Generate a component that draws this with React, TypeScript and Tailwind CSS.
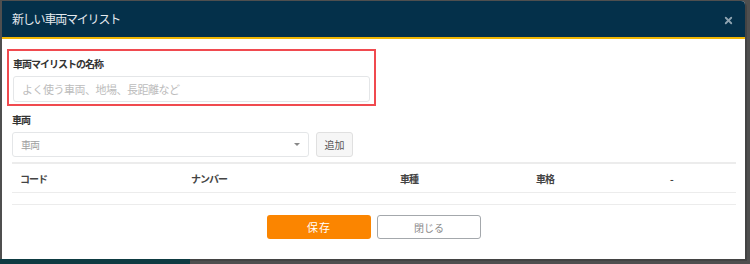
import { X } from 'lucide-react';

const columns = [
  { label: 'コード', width: 'w-[171px]' },
  { label: 'ナンバー', width: 'w-[209px]' },
  { label: '車種', width: 'w-[136px]' },
  { label: '車格', width: 'w-[134px]' },
  { label: '-', width: 'flex-1' },
];

export default function App() {
  return (
    <div
      className="w-[750px] h-[264px] bg-[#4f4f4f] flex flex-col overflow-hidden"
      style={{ fontFamily: '"Noto Sans CJK JP", "Noto Sans", sans-serif' }}
    >
      <div className="pl-[2px] pt-[1px]">
        <div className="w-[743px] h-[258px] bg-white rounded-tr-[4px] overflow-hidden flex flex-col shadow-[2px_2px_0_rgba(0,0,0,0.15)]">
          <div className="h-[38px] bg-[#04304a] flex items-center justify-between pl-[10px] pr-[10px] border-b-[2px] border-[#f2b705]">
            <span className="text-[12px] tracking-[-1.2px] text-[#e3e9ee]">新しい車両マイリスト</span>
            <X size={11} strokeWidth={4} className="text-[#8fa3b0] mt-[2px] mr-[1px]" />
          </div>

          <div className="px-[5px] pt-[10px]">
            <div className="w-[369px] h-[57px] border-[2px] border-[#f04a4f] px-[4px] pt-[6px]">
              <div className="text-[10px] tracking-[-1px] font-bold text-[#333] leading-[14px]">車両マイリストの名称</div>
              <div className="mt-[5px] h-[26px] border border-[#e4e6e8] rounded-[3px] flex items-center px-[8px]">
                <span className="text-[11px] tracking-[-0.5px] text-[#bcbcbc]">よく使う車両、地場、長距離など</span>
              </div>
            </div>
          </div>

          <div className="px-[10px] pt-[7px]">
            <div className="text-[10px] tracking-[-1px] font-bold text-[#333] leading-[14px]">車両</div>
            <div className="mt-[5px] flex gap-[7px]">
              <div className="w-[297px] h-[25px] border border-[#e4e6e8] rounded-[3px] flex items-center justify-between pl-[8px] pr-[8px]">
                <span className="text-[10px] tracking-[-1px] text-[#a0a0a0]">車両</span>
                <span className="w-0 h-0 border-l-[3px] border-r-[3px] border-t-[3px] border-l-transparent border-r-transparent border-t-[#888]" />
              </div>
              <div className="w-[37px] h-[25px] bg-[#f6f6f6] border border-[#e0e0e0] rounded-[3px] flex items-center justify-center text-[10px] text-[#555]">
                追加
              </div>
            </div>

            <div className="mt-[5px] w-[724px]">
              <div className="h-[31px] border-t-[2px] border-b-[1px] border-[#ececec] flex items-center pl-[8px]">
                {columns.map((c) => (
                  <div key={c.label} className={`${c.width} text-[10px] tracking-[-1px] font-bold text-[#444]`}>
                    {c.label}
                  </div>
                ))}
              </div>
              <div className="h-[12px] border-b border-[#ececec]" />
            </div>
          </div>

          <div className="flex justify-center gap-[6px] mt-[10px] pl-[1px]">
            <div className="w-[104px] h-[24px] bg-[#fb8500] rounded-[3px] flex items-center justify-center text-[11px] text-white tracking-[1px]">
              保存
            </div>
            <div className="w-[104px] h-[24px] border border-[#a4a8ac] rounded-[3px] flex items-center justify-center text-[10px] text-[#8a8a8a]">
              閉じる
            </div>
          </div>
        </div>
      </div>
      <div className="flex-1 flex">
        <div className="w-[190px] bg-[#0e3b42]" />
      </div>
    </div>
  );
}
